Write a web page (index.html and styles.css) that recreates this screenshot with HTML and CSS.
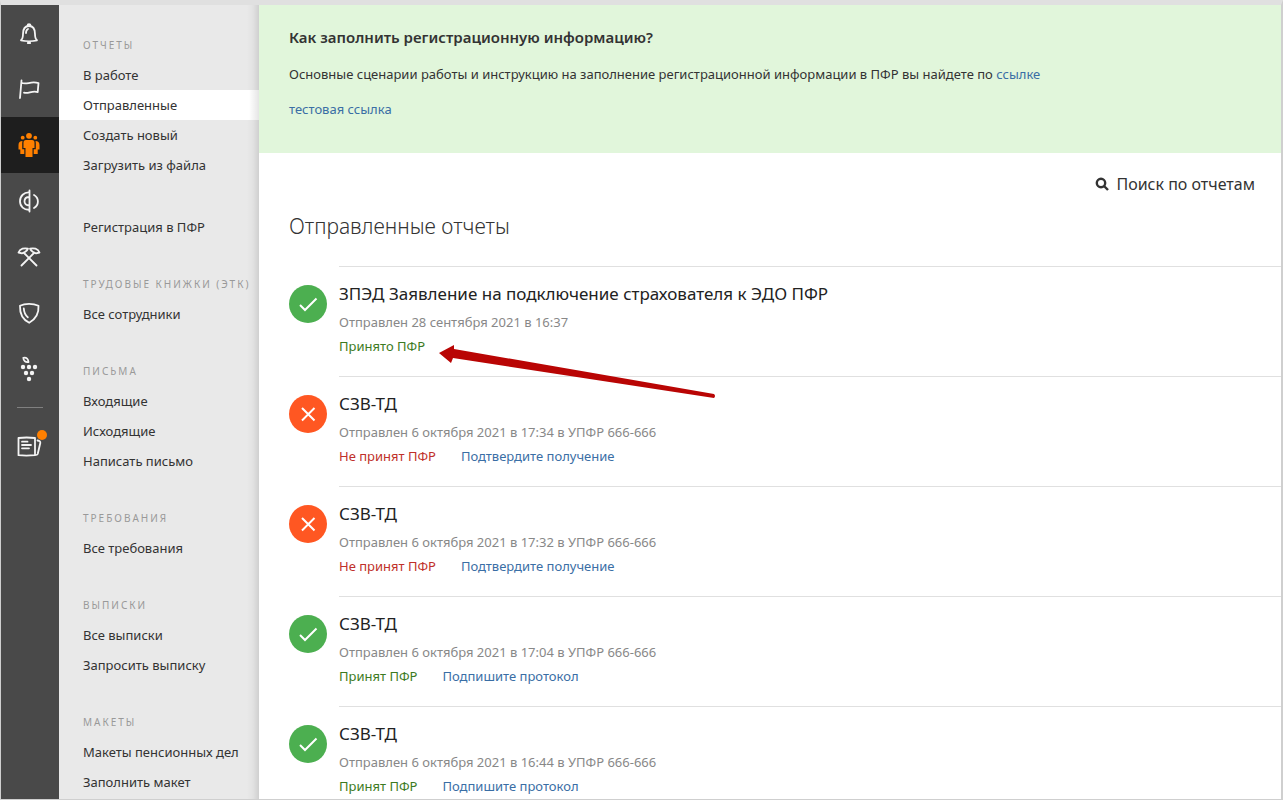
FILE: index.html
```html
<!DOCTYPE html>
<html lang="ru">
<head>
<meta charset="utf-8">
<meta name="viewport" content="width=device-width, initial-scale=1">
<title>Отправленные отчеты</title>
<link rel="stylesheet" href="styles.css">
</head>
<body>
<svg class="defs" aria-hidden="true">
  <symbol id="ok" viewBox="0 0 38 38"><path d="M11 20l5 5L27.500 13.500"/></symbol>
  <symbol id="no" viewBox="0 0 38 38"><path d="M13 13l12.500 12.500M25.500 13L13 25.500"/></symbol>
</svg>
<div class="app">
  <nav class="rail" aria-label="Сервисы">
    <a class="rail-link" href="#" aria-label="Уведомления"><svg class="icon" viewBox="0 0 28 28"><path d="M6 21.300c1.500-1.200 2-3.500 2-6.300 0-5 2-8 6-8s6 3 6 8c0 2.800.5 5.100 2 6.300-4 1-12 1-16 0z"/><path d="M11 14c0-2 .5-3.300 2-4"/><path d="M12.600 6.500a1.400 1.400 0 1 1 2.800 0M12.800 24h2.400"/></svg></a>
    <a class="rail-link" href="#" aria-label="Требования"><svg class="icon" viewBox="0 0 28 28"><path d="M6.500 5.500L5 23M6.400 7.800c5.500 2.500 9-2.200 17.100.300l-.8 9c-5.700-2-9.700 2.300-13.700.500"/></svg></a>
    <a class="rail-link active" href="#" aria-label="ПФР" aria-current="page"><svg class="icon solid" viewBox="0 0 28 28"><circle cx="14" cy="4.800" r="2.900"/><circle cx="7.700" cy="6.700" r="1.900"/><circle cx="20.300" cy="6.700" r="1.900"/><path d="M11 9h6q2.500 0 2.500 2.500V17h-2v9h-7v-9h-2v-5.500Q8.500 9 11 9z"/><path d="M7.500 10C5 10 3.500 11.500 3.500 14v4.500h1.800V23h4v-4.700H7.200V12zM20.500 10c2.500 0 4 1.500 4 4v4.500h-1.800V23h-4v-4.700h2.100V12z"/></svg></a>
    <a class="rail-link" href="#" aria-label="Статистика"><svg class="icon" viewBox="0 0 28 28"><path d="M14.500 3.500v21M14.500 5.500C9 5 5 9 5 14.300s4 8.800 9.500 8.400M14.500 10c-3 0-5 1.800-5 4.300s2 4.200 5 4.200M19 8c5.200 3 5.200 10 0 13"/></svg></a>
    <a class="rail-link" href="#" aria-label="Налоги"><svg class="icon" viewBox="0 0 28 28"><path d="M6.500 22.500L19 10M21.500 22.500L9 10"/><path d="M3.500 9.500c1.500-4 6-4.800 9.500-3.800-1 2-3 4-6 4.600zM24.500 9.500c-1.500-4-6-4.800-9.500-3.800 1 2 3 4 6 4.600z"/></svg></a>
    <a class="rail-link" href="#" aria-label="Страхование"><svg class="icon" viewBox="0 0 28 28"><path d="M5 6.800c5-2.700 13-2.700 18.500 0 .5 7.500-2.500 13.200-9.300 17C7.500 20.500 4.700 14.500 5 6.800z"/><path d="M8.800 9.500c.2 3.500 1.300 6.500 4 8.800"/></svg></a>
    <a class="rail-link" href="#" aria-label="Алкоголь"><svg class="icon" viewBox="0 0 28 28"><path d="M8.300 2.800c3.500-.6 5 1.200 5.200 4.200-3 .5-5-1-5.200-4.200z"/><g class="dots"><circle cx="8" cy="12" r="2.200"/><circle cx="14" cy="12" r="2.200"/><circle cx="20" cy="12" r="2.200"/><circle cx="11" cy="18" r="2.200"/><circle cx="17" cy="18" r="2.200"/><circle cx="14" cy="24" r="2.200"/></g></svg></a>
    <hr class="rail-rule">
    <a class="rail-link" href="#" aria-label="Новости"><svg class="icon" viewBox="0 0 28 28"><path d="M3.500 6q8-1 16.500 0v17.200q-9 .8-16.500 0zM7 9.700h5.500M7 13h9M7 16.300h7M22.500 8.500c2.500.5 3 .8 2.800 2.500L22.700 22c-.4 1-1.200 1.200-2.700 1.200"/></svg><span class="badge"></span></a>
  </nav>

  <nav class="sidebar" aria-label="Разделы">
    <section class="group">
      <h2 class="group-title">Отчеты</h2>
      <a class="item" href="#">В работе</a>
      <a class="item current" href="#" aria-current="page">Отправленные</a>
      <a class="item" href="#">Создать новый</a>
      <a class="item" href="#">Загрузить из файла</a>
      <a class="item separate" href="#">Регистрация в ПФР</a>
    </section>
    <section class="group">
      <h2 class="group-title">Трудовые книжки (ЭТК)</h2>
      <a class="item" href="#">Все сотрудники</a>
    </section>
    <section class="group">
      <h2 class="group-title">Письма</h2>
      <a class="item" href="#">Входящие</a>
      <a class="item" href="#">Исходящие</a>
      <a class="item" href="#">Написать письмо</a>
    </section>
    <section class="group">
      <h2 class="group-title">Требования</h2>
      <a class="item" href="#">Все требования</a>
    </section>
    <section class="group">
      <h2 class="group-title">Выписки</h2>
      <a class="item" href="#">Все выписки</a>
      <a class="item" href="#">Запросить выписку</a>
    </section>
    <section class="group">
      <h2 class="group-title">Макеты</h2>
      <a class="item" href="#">Макеты пенсионных дел</a>
      <a class="item" href="#">Заполнить макет</a>
    </section>
  </nav>

  <main class="content">
    <section class="notice">
      <h2 class="notice-title">Как заполнить регистрационную информацию?</h2>
      <p>Основные сценарии работы и инструкцию на заполнение регистрационной информации в ПФР вы найдете по <a href="#">ссылке</a></p>
      <p><a href="#">тестовая ссылка</a></p>
    </section>
    <div class="tools">
      <button class="search" type="button"><svg class="search-icon" viewBox="0 0 14 14"><circle cx="6" cy="6" r="4.200"/><path d="M9 9l4 4"/></svg>Поиск по отчетам</button>
    </div>
    <h1 class="title">Отправленные отчеты</h1>
    <ul class="reports">
      <li class="report">
        <svg class="status ok"><use href="#ok"/></svg>
        <div class="details">
          <a class="name" href="#">ЗПЭД Заявление на подключение страхователя к ЭДО ПФР</a>
          <p class="date">Отправлен 28 сентября 2021 в 16:37</p>
          <p class="result"><span class="accepted">Принято ПФР</span></p>
          <svg class="arrow" viewBox="0 0 278 56" aria-hidden="true"><path d="M0 9L15 1v4L275 50q2 2 0 4L14 14l-2 5z"/></svg>
        </div>
      </li>
      <li class="report">
        <svg class="status no"><use href="#no"/></svg>
        <div class="details">
          <a class="name" href="#">СЗВ-ТД</a>
          <p class="date">Отправлен 6 октября 2021 в 17:34 в УПФР 666-666</p>
          <p class="result"><span class="rejected">Не принят ПФР</span><a href="#">Подтвердите получение</a></p>
        </div>
      </li>
      <li class="report">
        <svg class="status no"><use href="#no"/></svg>
        <div class="details">
          <a class="name" href="#">СЗВ-ТД</a>
          <p class="date">Отправлен 6 октября 2021 в 17:32 в УПФР 666-666</p>
          <p class="result"><span class="rejected">Не принят ПФР</span><a href="#">Подтвердите получение</a></p>
        </div>
      </li>
      <li class="report">
        <svg class="status ok"><use href="#ok"/></svg>
        <div class="details">
          <a class="name" href="#">СЗВ-ТД</a>
          <p class="date">Отправлен 6 октября 2021 в 17:04 в УПФР 666-666</p>
          <p class="result"><span class="accepted">Принят ПФР</span><a href="#">Подпишите протокол</a></p>
        </div>
      </li>
      <li class="report">
        <svg class="status ok"><use href="#ok"/></svg>
        <div class="details">
          <a class="name" href="#">СЗВ-ТД</a>
          <p class="date">Отправлен 6 октября 2021 в 16:44 в УПФР 666-666</p>
          <p class="result"><span class="accepted">Принят ПФР</span><a href="#">Подпишите протокол</a></p>
        </div>
      </li>
    </ul>
  </main>
</div>
</body>
</html>
```
FILE: styles.css
```css
* { box-sizing: border-box; }

body {
  margin: 0;
  color: #333;
  background: #fff;
  font: 13px/20px "Noto Sans", "Open Sans", sans-serif;
}

h1, h2, p, ul { margin: 0; padding: 0; font-weight: 400; }
a { color: #3a6ea5; text-decoration: none; }
a:hover { text-decoration: underline; }

.defs { display: none; }

.app {
  display: flex;
  height: 100vh;
  border-style: solid;
  border-width: 5px 2px 1px 1px;
  border-color: #e0e0e0 #cfcfcf #cfcfcf #cfcfcf;
}

.rail {
  flex: none;
  width: 58px;
  background: #494949;
}

.rail-link {
  position: relative;
  display: flex;
  align-items: center;
  justify-content: center;
  height: 56px;
  padding-right: 2px;
}

.rail-link.active { background: #1e1e1e; }

.icon {
  width: 28px;
  height: 28px;
  fill: none;
  stroke: #f4f4f4;
  stroke-width: 1.8;
  stroke-linecap: round;
  stroke-linejoin: round;
}

.icon.solid { fill: #ff8000; stroke: none; }
.dots { fill: #f4f4f4; stroke: none; }

.rail-rule {
  width: 26px;
  height: 1px;
  margin: 10px auto;
  border: 0;
  background: #808080;
}

.badge {
  position: absolute;
  top: 12px;
  right: 12px;
  width: 10px;
  height: 10px;
  border-radius: 50%;
  background: #ff8000;
}

.sidebar {
  flex: none;
  width: 200px;
  padding-top: 25px;
  overflow-y: auto;
  scrollbar-width: none;
  background: linear-gradient(to left, #0000001c, #00000008 6px, #0000 12px) #e9e9e9;
}

.group { margin-bottom: 27px; }

.group-title {
  padding-left: 24px;
  color: #999;
  font-size: 10px;
  line-height: 30px;
  letter-spacing: 2px;
  text-transform: uppercase;
  white-space: nowrap;
}

.item {
  display: block;
  padding-left: 24px;
  color: #333;
  line-height: 30px;
  white-space: nowrap;
}

.item.current { background: linear-gradient(to left, #0000001a, #0000 10px) #fff; }
.item.separate { margin-top: 32px; }

.content {
  flex: 1;
  min-width: 0;
  overflow-y: auto;
  scrollbar-width: none;
}

.notice {
  padding: 22px 30px 34px;
  background: #e1f6db;
}

.notice-title {
  margin-bottom: 17px;
  font-size: 15px;
  font-weight: 600;
}

.notice p + p { margin-top: 15px; }

.tools {
  display: flex;
  justify-content: flex-end;
  padding: 19px 26px 16px;
}

.search {
  display: flex;
  align-items: center;
  gap: 7px;
  padding: 0;
  border: 0;
  background: none;
  color: #333;
  font: inherit;
  font-size: 16px;
  line-height: 24px;
  cursor: pointer;
}

.search-icon {
  width: 14px;
  height: 14px;
  fill: none;
  stroke: #333;
  stroke-width: 2.4;
}

.title {
  padding-left: 30px;
  font-size: 21px;
  font-weight: 300;
  line-height: 28px;
}

.reports {
  padding: 26px 0 0 30px;
  list-style: none;
}

.report { display: flex; gap: 12px; }

.status {
  flex: none;
  width: 38px;
  height: 38px;
  margin-top: 19px;
  border-radius: 50%;
  fill: none;
  stroke: #fff;
  stroke-width: 2;
}

.status.ok { background: #4caf50; }
.status.no { background: #ff5722; }

.details {
  position: relative;
  flex: 1;
  min-height: 110px;
  padding-top: 14px;
  border-top: 1px solid #e0e0e0;
}

.name {
  display: block;
  margin-bottom: 5px;
  color: #222;
  font-size: 17px;
  line-height: 26px;
}

.date { color: #888; }

.result {
  display: flex;
  gap: 25px;
  margin-top: 4px;
}

.accepted { color: #3c7a22; }
.rejected { color: #c0302a; }

.arrow {
  position: absolute;
  z-index: 1;
  top: 77px;
  left: 100px;
  width: 278px;
  height: 56px;
  fill: #b90504;
}
```
